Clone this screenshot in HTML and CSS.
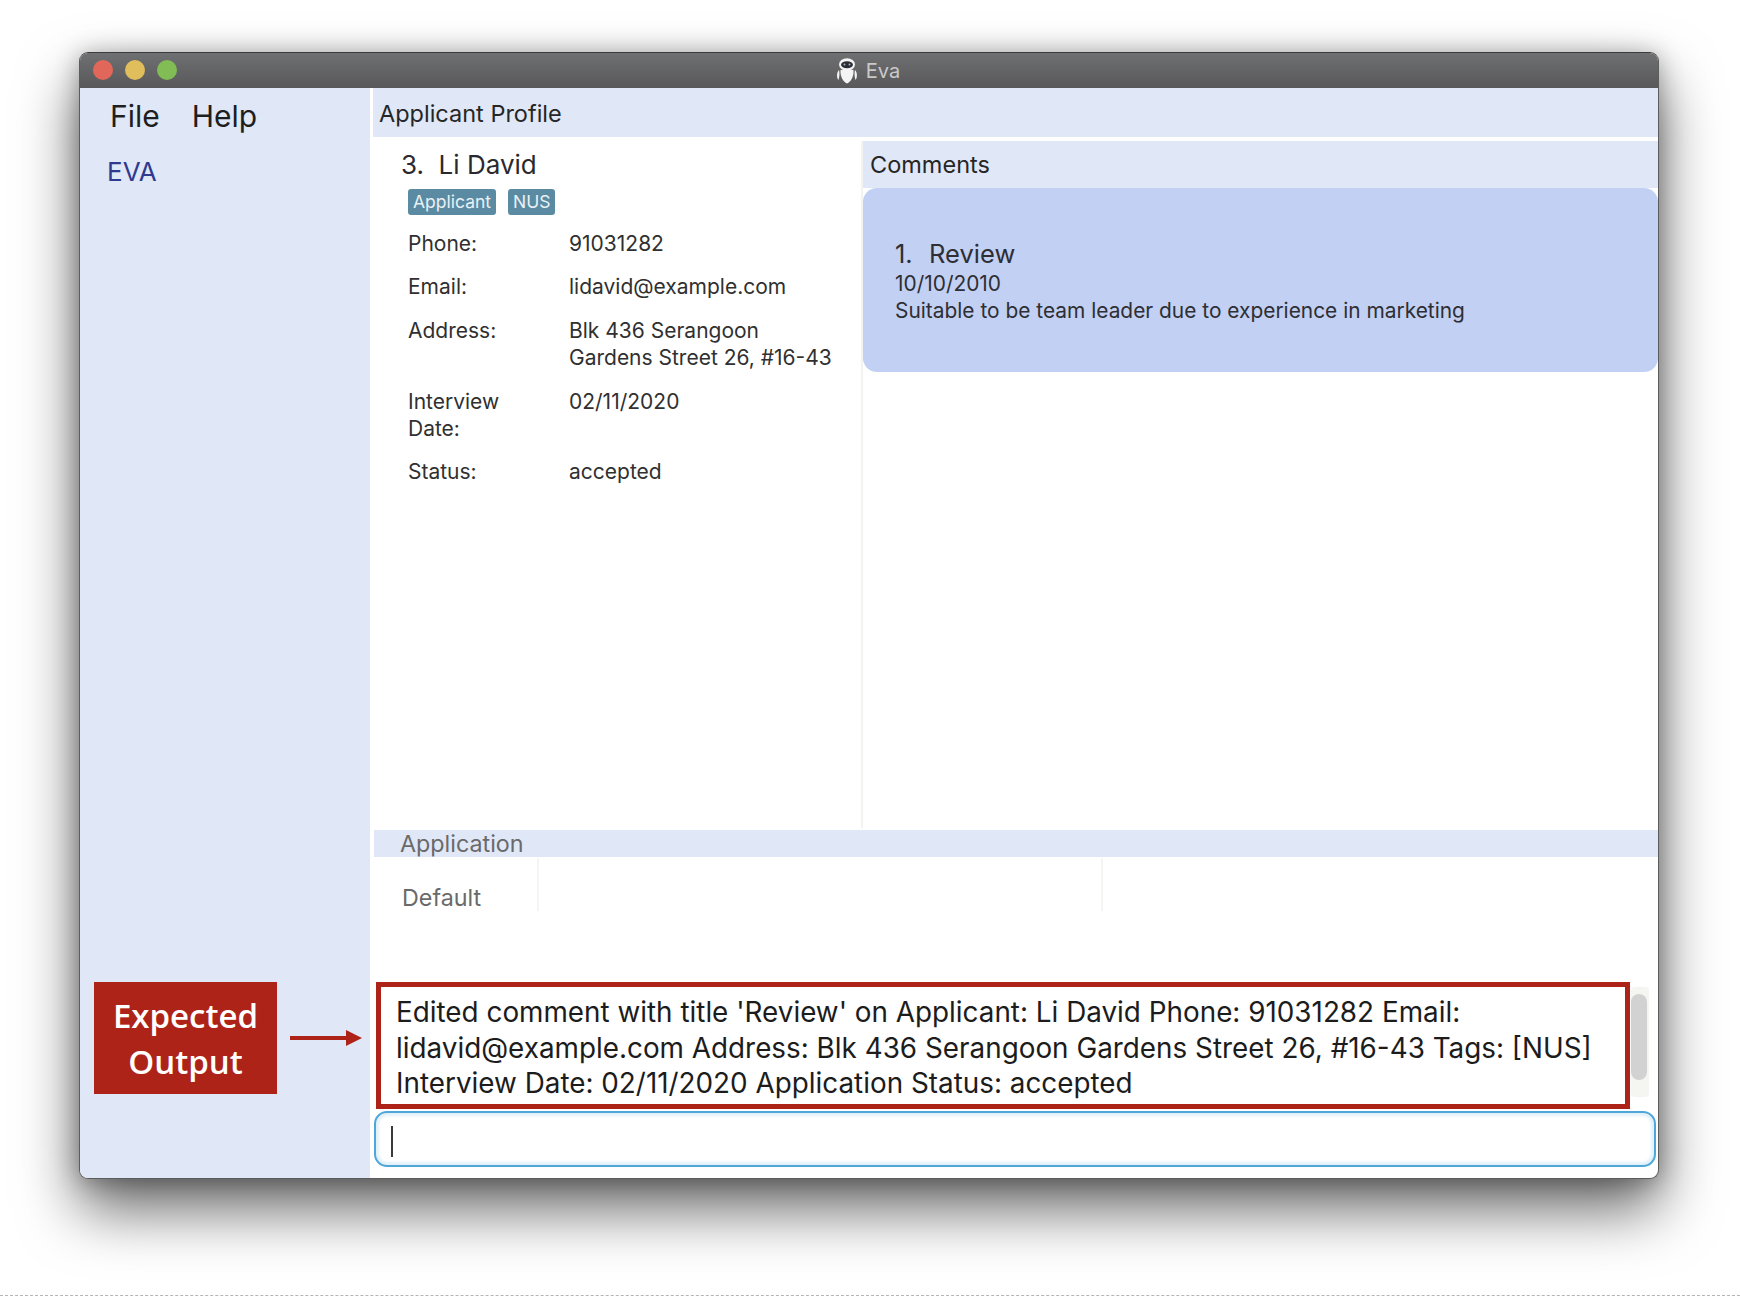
FILE: index.html
```html
<!DOCTYPE html>
<html lang="en">
<head>
    <meta charset="UTF-8">
    <title>Eva</title>
    <link rel="stylesheet" href="styles.css">
</head>
<body>
    <div class="page">
        <div class="window">
            <div class="titlebar">
                <div class="lights">
                    <span class="light red"></span>
                    <span class="light yellow"></span>
                    <span class="light green"></span>
                </div>
                <svg class="eve" width="24" height="26" viewBox="0 0 24 26">
                    <path d="M4 12 C1.5 14 1.5 20 3.5 22 C4.5 19 4.8 15 4 12Z M20 12 C22.5 14 22.5 20 20.500 22 C19.500 19 19.200 15 20 12Z" fill="#f4f4f4"/>
                    <path d="M5.500 12 H18.500 C19 18 16 24 12 25.500 C8 24 5 18 5.500 12Z" fill="#f4f4f4"/>
                    <ellipse cx="12" cy="6.500" rx="8" ry="6.300" fill="#f4f4f4"/>
                    <ellipse cx="12" cy="6.800" rx="6" ry="3.500" fill="#2b2d33"/>
                    <circle cx="9.500" cy="6.500" r="1" fill="#9fb4d0"/>
                    <circle cx="14.500" cy="6.500" r="1" fill="#9fb4d0"/>
                </svg>
                <span class="title-text">Eva</span>
            </div>
            <div class="content">
                <div class="sidebar">
                    <div class="menu">
                        <span>File</span>
                        <span>Help</span>
                    </div>
                    <div class="brand">EVA</div>
                </div>
                <div class="main">
                    <div class="profile-head">Applicant Profile</div>
                    <div class="split">
                        <div class="profile">
                            <div class="name">3.&nbsp; Li David</div>
                            <div class="tags">
                                <span class="tag">Applicant</span>
                                <span class="tag">NUS</span>
                            </div>
                            <div class="details">
                                <div>Phone:</div>
                                <div>91031282</div>
                                <div>Email:</div>
                                <div>lidavid@example.com</div>
                                <div>Address:</div>
                                <div>Blk 436 Serangoon<br>Gardens Street 26, #16-43</div>
                                <div>Interview<br>Date:</div>
                                <div>02/11/2020</div>
                                <div>Status:</div>
                                <div>accepted</div>
                            </div>
                        </div>
                        <div class="comments">
                            <div class="comments-head">Comments</div>
                            <div class="comment-card">
                                <div class="comment-title">1.&nbsp; Review</div>
                                <div>10/10/2010</div>
                                <div>Suitable to be team leader due to experience in marketing</div>
                            </div>
                        </div>
                    </div>
                    <div class="app-head">Application</div>
                    <div class="app-row">
                        <div class="app-cell first">Default</div>
                        <div class="app-cell second"></div>
                    </div>
                    <div class="result-row">
                        <div class="result">Edited comment with title 'Review' on Applicant: Li David Phone: 91031282 Email:<br>lidavid@example.com Address: Blk 436 Serangoon Gardens Street 26, #16-43 Tags: [NUS]<br>Interview Date: 02/11/2020 Application Status: accepted</div>
                        <div class="scrollbar"><div class="thumb"></div></div>
                    </div>
                    <div class="command"><span class="caret"></span></div>
                </div>
            </div>
            <!-- annotation on top of the window -->
            <div class="callout">Expected<br>Output</div>
            <svg class="arrow" width="74" height="18" viewBox="0 0 74 18">
                <path d="M0 7 H56 V1 L72 9 L56 17 V11 H0Z" fill="#ae2318"/>
            </svg>
        </div>
    </div>
</body>
</html>
```

FILE: styles.css
```css
* {
    box-sizing: border-box;
}

body {
    margin: 0;
    background: #fff;
    font-family: Inter, "Noto Sans", sans-serif;
    color: #2a2a2e;
}

.page {
    height: 1296px;
    padding: 52px 81px 116px 79px;
    border-bottom: 1px dashed #b5b5b5;
}

.window {
    position: relative;
    display: flex;
    flex-direction: column;
    height: 100%;
    background: #fff;
    border: 1px solid #5c5c5c;
    border-top-color: #3c3c3c;
    border-radius: 9px;
    overflow: visible;
    box-shadow: 0 30px 60px rgba(0,0,0,0.6), 0 2px 24px rgba(0,0,0,0.3);
}

.titlebar {
    position: relative;
    display: flex;
    justify-content: center;
    align-items: center;
    gap: 7px;
    height: 35px;
    padding-right: 3px;
    background: linear-gradient(to bottom, #6f7072, #58585a);
    border-radius: 8px 8px 0 0;
    flex-shrink: 0;
}

.lights {
    position: absolute;
    left: 13px;
    top: 7px;
    display: flex;
    gap: 12px;
}

.light {
    width: 20px;
    height: 20px;
    border-radius: 50%;
}

.red { background: #e2675b; }
.yellow { background: #dfbe5b; }
.green { background: #82bc55; }

.title-text {
    font-size: 20px;
    color: #c9c9c9;
}

.content {
    display: flex;
    flex: 1;
    min-height: 0;
}

.sidebar {
    width: 290px;
    padding: 9px 0 0 30px;
    background: #e0e7f7;
    border-radius: 0 0 0 8px;
    flex-shrink: 0;
}

.menu {
    display: flex;
    gap: 32px;
    font-size: 30px;
    line-height: 38px;
    color: #1e1e1e;
}

.brand {
    margin: 21px 0 0 -3px;
    font-size: 26px;
    line-height: 32px;
    color: #2f3a8f;
}

.main {
    display: flex;
    flex-direction: column;
    flex: 1;
    min-width: 0;
    padding-left: 3px;
    border-radius: 0 0 8px 0;
}

.profile-head {
    height: 49px;
    padding-left: 6px;
    background: #e0e7f7;
    font-size: 23.500px;
    line-height: 51px;
    color: #262626;
    flex-shrink: 0;
}

.split {
    display: flex;
    height: 687px;
    margin-top: 4px;
    flex-shrink: 0;
}

.profile {
    width: 490px;
    padding: 6px 0 0 28px;
    border-right: 2px solid #f3f3f0;
    flex-shrink: 0;
}

.name {
    font-size: 26px;
    line-height: 36px;
}

.tags {
    display: flex;
    gap: 12px;
    margin: 6px 0 0 7px;
}

.tag {
    padding: 0 5px;
    height: 26px;
    background: #5b8ba3;
    border-radius: 3px;
    color: #e8f1f5;
    font-size: 17.500px;
    line-height: 26px;
}

.details {
    display: grid;
    grid-template-columns: 161px 1fr;
    row-gap: 16px;
    margin: 15px 0 0 7px;
    font-size: 21px;
    line-height: 27.400px;
    color: #303030;
}

.comments {
    flex: 1;
    min-width: 0;
}

.comments-head {
    height: 47px;
    padding-left: 7px;
    background: #e0e7f7;
    font-size: 23.500px;
    line-height: 47px;
    color: #262626;
}

.comment-card {
    height: 184px;
    padding: 49px 0 0 32px;
    background: #c1d0f3;
    border-radius: 14px;
    font-size: 20.900px;
    line-height: 27px;
    color: #2e2e33;
}

.comment-title {
    font-size: 25.500px;
    line-height: 33px;
    word-spacing: 1px;
}

.app-head {
    height: 27px;
    margin: 2px 0 0 1px;
    padding-left: 26px;
    background: #e0e7f7;
    font-size: 23.300px;
    line-height: 27px;
    color: #6a6a6a;
    flex-shrink: 0;
}

.app-row {
    display: flex;
    height: 53px;
    margin-top: 1px;
    flex-shrink: 0;
}

.app-cell {
    height: 100%;
    border-right: 2px solid #f5f5f2;
}

.first {
    width: 166px;
    padding: 25px 0 0 29px;
    font-size: 23.300px;
    line-height: 30px;
    color: #6a6a6a;
}

.second {
    width: 564px;
}

.result-row {
    display: flex;
    margin-top: 71px;
    height: 127px;
    flex-shrink: 0;
}

.result {
    width: 1254px;
    margin-left: 3px;
    padding: 8px 0 0 15px;
    border: 5px solid #ae2318;
    font-size: 27.850px;
    line-height: 35.500px;
    color: #1c1c1c;
    white-space: nowrap;
}

.scrollbar {
    width: 18px;
    height: 110px;
    margin: 5px 0 0 1px;
    padding: 7px 2px 0 0;
    background: #f5f5f2;
    border-radius: 4px;
}

.thumb {
    height: 86px;
    background: #d2d2d2;
    border-radius: 8px;
}

.command {
    width: 1282px;
    height: 56px;
    margin: 2px 0 0 1px;
    padding: 13px 0 0 15px;
    border: 2px solid #4fa6d8;
    border-radius: 13px;
    box-shadow: inset 0 0 3px 3px #e1f0f8;
    flex-shrink: 0;
}

.caret {
    display: block;
    width: 2px;
    height: 31px;
    background: #3a3a3a;
}

.callout {
    position: absolute;
    left: 14px;
    top: 929px;
    width: 183px;
    height: 112px;
    padding-top: 11px;
    background: #ae2318;
    color: #fff;
    font-family: "Open Sans", sans-serif;
    font-size: 33px;
    font-weight: 600;
    line-height: 46px;
    text-align: center;
}

.arrow {
    position: absolute;
    left: 210px;
    top: 976px;
}
```
